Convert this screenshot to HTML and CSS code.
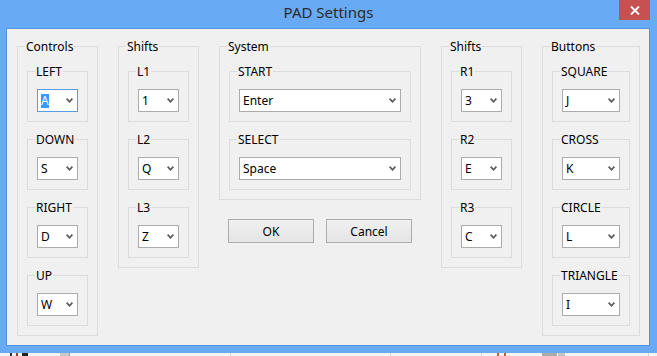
FILE: index.html
```html
<!DOCTYPE html>
<html lang="en">
<head>
<meta charset="utf-8">
<title>PAD Settings</title>
<link rel="stylesheet" href="styles.css">
</head>
<body>
<div class="window">
  <div class="titlebar">
    <div class="title">PAD Settings</div>
    <button class="close" aria-label="Close">
      <svg width="10" height="9" viewBox="0 0 10 9"><path d="M1 0.5 L9 8.5 M9 0.5 L1 8.5" stroke="#fff" stroke-width="1.8" fill="none"/></svg>
    </button>
  </div>
  <div class="client">
    <div class="row">
      <fieldset class="group">
        <legend>Controls</legend>
        <div class="stack">
          <fieldset class="group"><legend>LEFT</legend>
            <div class="combo w-s focus"><span class="val sel">A</span><svg class="chev" width="7" height="5" viewBox="0 0 7 5"><path d="M0.6 0.7 L3.5 3.8 L6.4 0.7"/></svg></div>
          </fieldset>
          <fieldset class="group"><legend>DOWN</legend>
            <div class="combo w-s"><span class="val">S</span><svg class="chev" width="7" height="5" viewBox="0 0 7 5"><path d="M0.6 0.7 L3.5 3.8 L6.4 0.7"/></svg></div>
          </fieldset>
          <fieldset class="group"><legend>RIGHT</legend>
            <div class="combo w-s"><span class="val">D</span><svg class="chev" width="7" height="5" viewBox="0 0 7 5"><path d="M0.6 0.7 L3.5 3.8 L6.4 0.7"/></svg></div>
          </fieldset>
          <fieldset class="group"><legend>UP</legend>
            <div class="combo w-s"><span class="val">W</span><svg class="chev" width="7" height="5" viewBox="0 0 7 5"><path d="M0.6 0.7 L3.5 3.8 L6.4 0.7"/></svg></div>
          </fieldset>
        </div>
      </fieldset>

      <fieldset class="group">
        <legend>Shifts</legend>
        <div class="stack">
          <fieldset class="group"><legend>L1</legend>
            <div class="combo w-s"><span class="val">1</span><svg class="chev" width="7" height="5" viewBox="0 0 7 5"><path d="M0.6 0.7 L3.5 3.8 L6.4 0.7"/></svg></div>
          </fieldset>
          <fieldset class="group"><legend>L2</legend>
            <div class="combo w-s"><span class="val">Q</span><svg class="chev" width="7" height="5" viewBox="0 0 7 5"><path d="M0.6 0.7 L3.5 3.8 L6.4 0.7"/></svg></div>
          </fieldset>
          <fieldset class="group"><legend>L3</legend>
            <div class="combo w-s"><span class="val">Z</span><svg class="chev" width="7" height="5" viewBox="0 0 7 5"><path d="M0.6 0.7 L3.5 3.8 L6.4 0.7"/></svg></div>
          </fieldset>
        </div>
      </fieldset>

      <div class="col">
        <fieldset class="group">
          <legend>System</legend>
          <div class="stack">
            <fieldset class="group"><legend>START</legend>
              <div class="combo w-l"><span class="val">Enter</span><svg class="chev" width="7" height="5" viewBox="0 0 7 5"><path d="M0.6 0.7 L3.5 3.8 L6.4 0.7"/></svg></div>
            </fieldset>
            <fieldset class="group"><legend>SELECT</legend>
              <div class="combo w-l"><span class="val">Space</span><svg class="chev" width="7" height="5" viewBox="0 0 7 5"><path d="M0.6 0.7 L3.5 3.8 L6.4 0.7"/></svg></div>
            </fieldset>
          </div>
        </fieldset>
        <div class="actions">
          <button class="btn">OK</button>
          <button class="btn">Cancel</button>
        </div>
      </div>

      <fieldset class="group">
        <legend>Shifts</legend>
        <div class="stack">
          <fieldset class="group"><legend>R1</legend>
            <div class="combo w-s"><span class="val">3</span><svg class="chev" width="7" height="5" viewBox="0 0 7 5"><path d="M0.6 0.7 L3.5 3.8 L6.4 0.7"/></svg></div>
          </fieldset>
          <fieldset class="group"><legend>R2</legend>
            <div class="combo w-s"><span class="val">E</span><svg class="chev" width="7" height="5" viewBox="0 0 7 5"><path d="M0.6 0.7 L3.5 3.8 L6.4 0.7"/></svg></div>
          </fieldset>
          <fieldset class="group"><legend>R3</legend>
            <div class="combo w-s"><span class="val">C</span><svg class="chev" width="7" height="5" viewBox="0 0 7 5"><path d="M0.6 0.7 L3.5 3.8 L6.4 0.7"/></svg></div>
          </fieldset>
        </div>
      </fieldset>

      <fieldset class="group">
        <legend>Buttons</legend>
        <div class="stack">
          <fieldset class="group"><legend>SQUARE</legend>
            <div class="combo w-m"><span class="val">J</span><svg class="chev" width="7" height="5" viewBox="0 0 7 5"><path d="M0.6 0.7 L3.5 3.8 L6.4 0.7"/></svg></div>
          </fieldset>
          <fieldset class="group"><legend>CROSS</legend>
            <div class="combo w-m"><span class="val">K</span><svg class="chev" width="7" height="5" viewBox="0 0 7 5"><path d="M0.6 0.7 L3.5 3.8 L6.4 0.7"/></svg></div>
          </fieldset>
          <fieldset class="group"><legend>CIRCLE</legend>
            <div class="combo w-m"><span class="val">L</span><svg class="chev" width="7" height="5" viewBox="0 0 7 5"><path d="M0.6 0.7 L3.5 3.8 L6.4 0.7"/></svg></div>
          </fieldset>
          <fieldset class="group"><legend>TRIANGLE</legend>
            <div class="combo w-m"><span class="val">I</span><svg class="chev" width="7" height="5" viewBox="0 0 7 5"><path d="M0.6 0.7 L3.5 3.8 L6.4 0.7"/></svg></div>
          </fieldset>
        </div>
      </fieldset>
    </div>
  </div>
</div>
<div class="desk"></div>
</body>
</html>
```

FILE: styles.css
```css
* { box-sizing: border-box; }
html, body { margin: 0; padding: 0; }
body {
  width: 657px;
  height: 356px;
  overflow: hidden;
  background: #f4f4f4;
  font-family: "Noto Sans", "Open Sans", sans-serif;
  font-size: 12px;
  color: #000;
}
.window {
  width: 657px;
  height: 353px;
  background: #69aaf4;
  display: flex;
  flex-direction: column;
}
.titlebar {
  height: 28px;
  flex: none;
  display: grid;
  grid-template-columns: 1fr auto 1fr;
  align-items: start;
}
.title {
  grid-column: 2;
  font-size: 15px;
  line-height: 19px;
  padding-top: 3px;
  color: #2b2b2b;
  white-space: nowrap;
}
.close {
  grid-column: 3;
  justify-self: end;
  width: 31px;
  height: 20px;
  margin-right: 7px;
  background: #c75050;
  border: 0;
  padding: 0;
  display: flex;
  align-items: center;
  justify-content: center;
}
.client {
  margin: 0 7px 0 6px;
  height: 318px;
  flex: none;
  border: 1px solid #5292de;
  background: #f0f0f0;
  padding: 10px 0 0 10px;
}
.row {
  display: flex;
  gap: 20px;
  align-items: flex-start;
}
.group {
  margin: 0;
  padding: 10px 9px 9px;
  border: 1px solid #dcdcdc;
  min-width: 0;
}
.group > legend {
  margin-left: -2px;
  padding: 0 1px;
  line-height: 15px;
  white-space: nowrap;
}
.stack {
  display: flex;
  flex-direction: column;
  gap: 10px;
}
.combo {
  height: 23px;
  background: #fff;
  border: 1px solid #acacac;
  display: flex;
  align-items: center;
  justify-content: space-between;
  padding: 0 4px 0 3px;
}
.combo.focus { border-color: #569de5; }
.w-s { width: 41px; }
.w-m { width: 58px; }
.w-l { width: 162px; }
.val { line-height: 14px; }
.val.sel { background: #3399ff; color: #fff; }
.chev { flex: none; }
.chev path {
  fill: none;
  stroke: #5a5a5a;
  stroke-width: 1.7;
}
.col {
  display: flex;
  flex-direction: column;
}
.actions {
  display: flex;
  gap: 12px;
  padding: 0 9px;
  margin-top: 19px;
}
.btn {
  width: 86px;
  height: 24px;
  border: 1px solid #acacac;
  background: linear-gradient(#f0f0f0, #e5e5e5);
  font: inherit;
  color: #000;
  padding: 0;
}
.desk {
  height: 3px;
  background: linear-gradient(to right,
    #f4f4f4 0 10px, #333 10px 12px, #f4f4f4 12px 16px, #b03030 16px 18px,
    #f4f4f4 18px 22px, #222 22px 28px, #f4f4f4 28px 60px, #c9c9c9 60px 69px,
    #999 69px 70px, #f4f4f4 70px 230px, #d5d5d5 230px 231px, #f4f4f4 231px 390px,
    #d5d5d5 390px 391px, #f4f4f4 391px 481px, #d5d5d5 481px 482px, #f4f4f4 482px 497px,
    #c0602a 497px 499px, #f4f4f4 499px 504px, #c0602a 504px 506px, #f4f4f4 506px 542px,
    #ababab 542px 557px, #f4f4f4 557px 558px, #c4c4c4 558px 565px, #f4f4f4 565px 648px,
    #d5d5d5 648px 649px, #f4f4f4 649px);
}
```
